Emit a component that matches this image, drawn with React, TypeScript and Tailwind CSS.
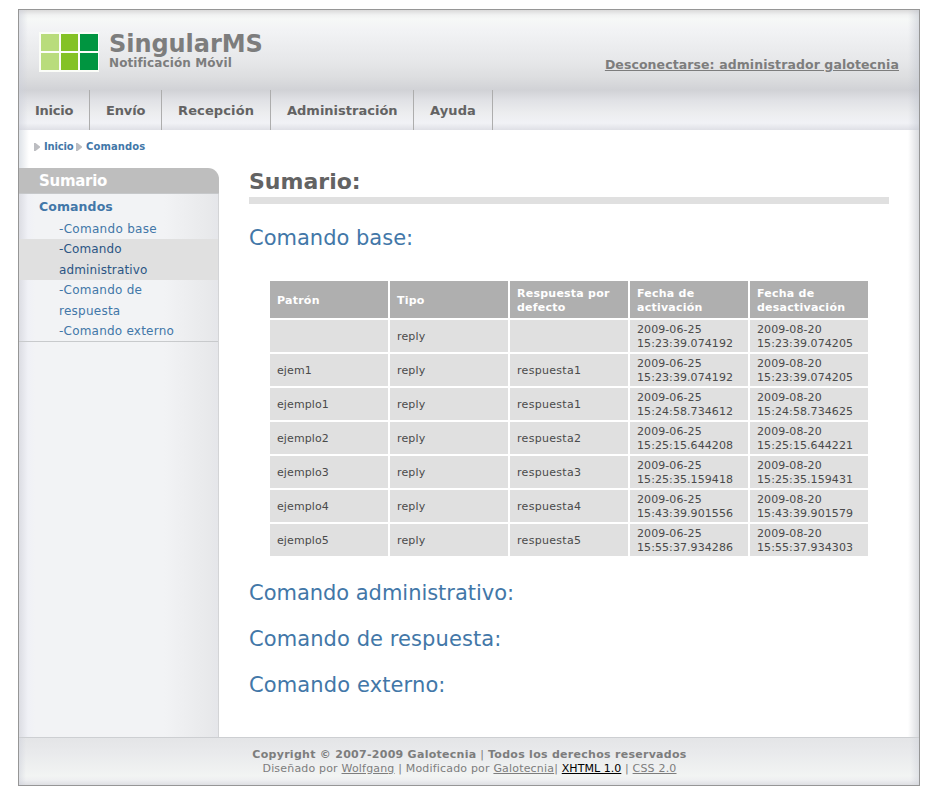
const navItems = [
  { label: "Inicio", cls: "w-[71px] tracking-[-0.25px]" },
  { label: "Envío", cls: "w-[72px] tracking-[-0.15px]" },
  { label: "Recepción", cls: "w-[109px] tracking-[0.12px]" },
  { label: "Administración", cls: "w-[143px]" },
  { label: "Ayuda", cls: "w-[79px] tracking-[0.1px]" },
];

const columns = ["Patrón", "Tipo", "Respuesta por defecto", "Fecha de activación", "Fecha de desactivación"];

const rows = [
  ["", "reply", "", "2009-06-25 15:23:39.074192", "2009-08-20 15:23:39.074205"],
  ["ejem1", "reply", "respuesta1", "2009-06-25 15:23:39.074192", "2009-08-20 15:23:39.074205"],
  ["ejemplo1", "reply", "respuesta1", "2009-06-25 15:24:58.734612", "2009-08-20 15:24:58.734625"],
  ["ejemplo2", "reply", "respuesta2", "2009-06-25 15:25:15.644208", "2009-08-20 15:25:15.644221"],
  ["ejemplo3", "reply", "respuesta3", "2009-06-25 15:25:35.159418", "2009-08-20 15:25:35.159431"],
  ["ejemplo4", "reply", "respuesta4", "2009-06-25 15:43:39.901556", "2009-08-20 15:43:39.901579"],
  ["ejemplo5", "reply", "respuesta5", "2009-06-25 15:55:37.934286", "2009-08-20 15:55:37.934303"],
];

const cellTracking = ["tracking-[0.1px]", "tracking-[0.15px]", "tracking-[0.3px]", "tracking-[0.08px]", "tracking-[0.08px]"];

function Logo() {
  return (
    <div className="-mt-px grid h-[40px] w-[60px] grid-cols-[18px_17px_18px] grid-rows-[17px_17px] content-center justify-center gap-[2px] bg-[#fbfdf8]">
      <span className="bg-[#b9dc7c]" />
      <span className="bg-[#84c225]" />
      <span className="bg-[#009540]" />
      <span className="bg-[#b9dc7c]" />
      <span className="bg-[#84c225]" />
      <span className="bg-[#009540]" />
    </div>
  );
}

function Arrow() {
  return (
    <svg width="6" height="8" viewBox="0 0 6 8" className="shrink-0">
      <path d="M0 0H1.5L6 3.5V4.5L1.5 8H0Z" fill="#bcbdc1" />
    </svg>
  );
}

function Header() {
  return (
    <header className="flex h-[80px] items-start justify-between bg-[linear-gradient(90deg,rgba(205,208,218,.55),rgba(220,224,232,0)_9px,rgba(220,224,232,0)_889px,rgba(190,195,205,.5)),linear-gradient(#dadada,#f1f2f2_5px,#f6f8f7_9px,#f2f3f5_20px,#e6e7e9_52px,#dddee0_67px,#d1d2d6_80px)] pr-5 pl-5 text-[#7d7d7d]">
      <div className="flex pt-[23px]">
        <Logo />
        <div className="pl-[10px] font-bold">
          <h1 className="h-[23px] text-2xl leading-[23px] tracking-[-0.05px] whitespace-nowrap">SingularMS</h1>
          <p className="h-[14px] text-xs leading-[14px] tracking-[0.1px] whitespace-nowrap">Notificación Móvil</p>
        </div>
      </div>
      <a href="#" className="mt-[47px] text-[12.5px] leading-4 font-bold tracking-[0.09px] underline">
        Desconectarse: administrador galotecnia
      </a>
    </header>
  );
}

function Nav() {
  return (
    <nav className="flex h-[40px] bg-[linear-gradient(90deg,rgba(205,208,218,.55),rgba(220,224,232,0)_9px,rgba(220,224,232,0)_889px,rgba(190,195,205,.5)),linear-gradient(#d1d2d6,#e0e1e5_10px,#ebecee_22px,#f1f2f6_33px,#dfe0e6_40px)]">
      {navItems.map((n) => (
        <a
          key={n.label}
          href="#"
          className={`block h-full border-r border-[#adadad] pl-4 text-[13px] leading-[42px] font-bold whitespace-nowrap text-[#636363] ${n.cls}`}
        >
          {n.label}
        </a>
      ))}
    </nav>
  );
}

function Sidebar() {
  return (
    <aside className="w-[200px] shrink-0">
      <h2 className="h-[26px] rounded-tr-[11px] border-b border-[#c6c8ca] bg-[#bebebe] pl-5 text-[15px] leading-[26px] font-bold tracking-[-0.28px] text-white">
        Sumario
      </h2>
      <div className="h-[543px] border-r border-[#d3d4d6] bg-[linear-gradient(90deg,#dcdde3,#f0f1f6_9px,#f2f3f5_16px,#f2f3f5_145px,#e8e9eb_190px,#e5e6ea)]">
        <div className="border-b border-[#c8cacc] text-xs text-[#4277a8]">
          <a href="#" className="block h-[25px] pl-5 text-[12.5px] leading-[26px] font-bold tracking-[0.1px]">
            Comandos
          </a>
          <ul className="leading-[20.5px]">
            <li className="h-[20px] pl-10 leading-5 tracking-[0.3px]">-Comando base</li>
            <li className="h-[41px] bg-[#e0e0e0] pl-10 tracking-[0.12px] text-[#2b5584]">
              -Comando
              <br />
              administrativo
            </li>
            <li className="h-[41px] pl-10 tracking-[0.25px]">
              -Comando de
              <br />
              respuesta
            </li>
            <li className="h-[20px] pl-10 leading-5 tracking-[0.22px]">-Comando externo</li>
          </ul>
        </div>
      </div>
    </aside>
  );
}

function CommandTable() {
  return (
    <table className="ml-[19px] w-[602px] table-fixed border-separate border-spacing-[2px] text-[11px] leading-[14px] text-[#4a4a4a]">
      <thead>
        <tr className="h-[37px]">
          {columns.map((c) => (
            <th key={c} className="bg-[#afafaf] px-[7px] pt-[2px] pb-0 text-left font-bold tracking-[0.24px] text-white">
              {c}
            </th>
          ))}
        </tr>
      </thead>
      <tbody>
        {rows.map((r, i) => (
          <tr key={i} className="h-[32px]">
            {r.map((c, j) => (
              <td key={j} className={`bg-[#e0e0e0] px-[7px] pt-[2px] pb-0 ${cellTracking[j]}`}>
                {c}
              </td>
            ))}
          </tr>
        ))}
      </tbody>
    </table>
  );
}

const sectionTitle = "h-[46px] text-[21px] leading-[46px] text-[#4277a8]";

export default function App() {
  return (
    <div className="h-[800px] bg-white pt-[9px] pl-[18px] font-['DejaVu_Sans',sans-serif]">
      <div className="w-[902px] border border-[#969696] bg-[linear-gradient(90deg,#dfe3e8,#fff_10px,#fff_889px,#d9dbdf)]">
        <Header />
        <Nav />
        <div className="flex h-[38px] items-start pt-[8px] pl-[15px] text-[10px] leading-[17px] font-bold text-[#4277a8]">
          <span className="flex items-center">
            <Arrow />
            <a href="#" className="w-[32px] pl-1 tracking-[-0.15px]">Inicio</a>
          </span>
          <span className="ml-1 flex items-center">
            <Arrow />
            <a href="#" className="pl-1 tracking-[0.1px]">Comandos</a>
          </span>
        </div>
        <div className="flex h-[569px]">
          <Sidebar />
          <main className="w-[670px] pl-[30px]">
            <h1 className="h-[36px] border-b-[7px] border-[#e0e0e0] text-[22px] leading-[27px] font-bold text-[#636363]">
              Sumario:
            </h1>
            <h2 className={`mt-[11px] ${sectionTitle}`}>Comando base:</h2>
            <div className="pt-[18px] pb-[12px]">
              <CommandTable />
            </div>
            <h2 className={`tracking-[-0.03px] ${sectionTitle}`}>Comando administrativo:</h2>
            <h2 className={`tracking-[0.08px] ${sectionTitle}`}>Comando de respuesta:</h2>
            <h2 className={`tracking-[0.12px] ${sectionTitle}`}>Comando externo:</h2>
          </main>
        </div>
        <footer className="h-[48px] border-t border-[#cdcfd2] bg-[linear-gradient(90deg,rgba(205,208,218,.5),rgba(220,224,232,0)_7px,rgba(220,224,232,0)_891px,rgba(205,208,216,.5)),linear-gradient(#e4e5e7,#e9eaec_15px,#f2f4f3_38px,#eeeff1_42px,#dedfe3)] pt-[10px] pl-px text-center text-[11px] leading-[14px] text-[#7d7d7d]">
          <p className="tracking-[0.28px]">
            <b>Copyright © 2007-2009 Galotecnia</b> | <b>Todos los derechos reservados</b>
          </p>
          <p className="tracking-[0.18px]">
            Diseñado por <a href="#" className="underline">Wolfgang</a> | Modificado por{" "}
            <a href="#" className="underline">Galotecnia</a>|{" "}
            <a href="#" className="tracking-[0.05px] text-black underline">XHTML 1.0</a> |{" "}
            <a href="#" className="underline">CSS 2.0</a>
          </p>
        </footer>
      </div>
    </div>
  );
}
